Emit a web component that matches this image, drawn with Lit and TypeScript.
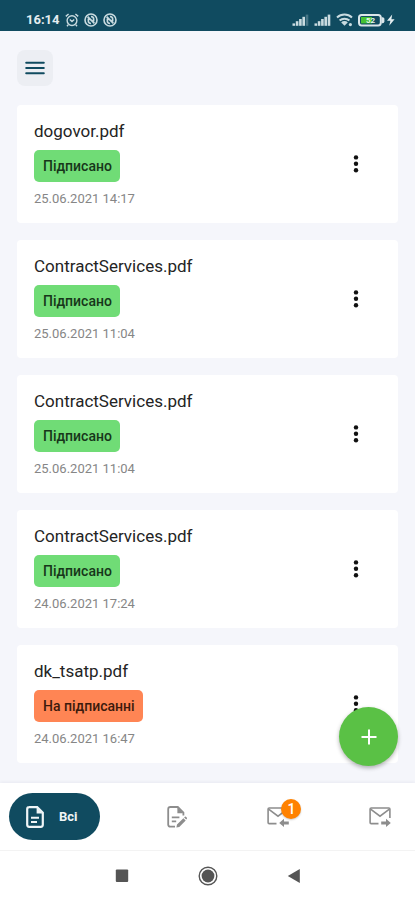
import { LitElement, html, css, svg } from "lit";
import { customElement, property } from "lit/decorators.js";
import { classMap } from "lit/directives/class-map.js";

interface Doc {
  name: string;
  status: string;
  pending?: boolean;
  date: string;
}

const DOCS: Doc[] = [
  { name: "dogovor.pdf", status: "Підписано", date: "25.06.2021 14:17" },
  { name: "ContractServices.pdf", status: "Підписано", date: "25.06.2021 11:04" },
  { name: "ContractServices.pdf", status: "Підписано", date: "25.06.2021 11:04" },
  { name: "ContractServices.pdf", status: "Підписано", date: "24.06.2021 17:24" },
  { name: "dk_tsatp.pdf", status: "На підписанні", pending: true, date: "24.06.2021 16:47" },
];

const buttonReset = css`
  * {
    box-sizing: border-box;
  }
  button {
    display: flex;
    align-items: center;
    justify-content: center;
    margin: 0;
    padding: 0;
    border: 0;
    background: none;
    color: inherit;
    font: inherit;
    cursor: pointer;
  }
  svg {
    display: block;
    flex: none;
  }
`;

@customElement("status-bar")
class StatusBar extends LitElement {
  static styles = css`
    :host {
      display: flex;
      align-items: center;
      justify-content: space-between;
      height: 31px;
      padding: 8px 20px 0 26px;
      box-sizing: border-box;
      background: #104b60;
      color: #e4edf0;
      font-size: 13px;
      font-weight: 700;
      line-height: 16px;
    }
    .group {
      display: flex;
      align-items: center;
      gap: 5px;
    }
    svg {
      display: block;
    }
  `;

  private blocked() {
    return html`<svg width="14" height="14" viewBox="0 0 14 14" fill="none" stroke="#c9dbe0">
      <circle cx="7" cy="7" r="6" stroke-width="1.6" />
      <path d="M3.6 3.6l6.8 6.8M4.4 5.6v2.6a2.2 2.2 0 0 0 2.6 2.2M9.6 8.6V5.8A2.2 2.2 0 0 0 7 3.6" stroke-width="1.7" />
    </svg>`;
  }

  private signal(last: number) {
    return html`<svg width="17" height="12" viewBox="0 0 17 12">
      ${[0, 1, 2, 3, 4].map(
        (i) => svg`<rect x=${0.5 + i * 3.3} y=${9.4 - i * 2.2} width="2.6" height=${2.4 + i * 2.2}
          fill="#c9dbe0" opacity=${i < last ? 1 : 0.3} />`
      )}
    </svg>`;
  }

  render() {
    return html`
      <div class="group">
        <span>16:14</span>
        <svg width="14" height="14" viewBox="0 0 14 14" fill="none" stroke="#c9dbe0" stroke-width="1.4">
          <circle cx="7" cy="7.6" r="4.9" />
          <path d="M.8 3.4 3.6 1M13.2 3.4 10.4 1M4.8 6.6 7 8.6l2.2-2M3.2 11.8 2 13.2M10.8 11.8l1.2 1.4" />
        </svg>
        ${this.blocked()} ${this.blocked()}
      </div>
      <div class="group">
        ${this.signal(4)} ${this.signal(5)}
        <svg width="17" height="14" viewBox="0 0 17 14" fill="none" stroke="#c9dbe0" stroke-width="2">
          <path d="M1 4.4a11 11 0 0 1 15 0M3.6 7.6a7.2 7.2 0 0 1 9.8 0" />
          <path d="M5.2 9.4a4.6 4.6 0 0 1 6.6 0L8.5 12.8z" fill="#c9dbe0" stroke="none" />
          <circle cx="14.4" cy="11.6" r="1.6" fill="#c9dbe0" stroke="none" />
        </svg>
        <svg width="37" height="14" viewBox="0 0 37 14">
          <rect x="1" y="2" width="21.8" height="10.4" rx="2.6" fill="none" stroke="#dbe6ea" stroke-width="2" />
          <rect x="3" y="4" width="11" height="6.4" fill="#45c332" />
          <path d="M23.6 4.2h1q1.8 0 1.8 1.6v2.8q0 1.6-1.8 1.6h-1z" fill="#dbe6ea" />
          <text x="12.5" y="10" text-anchor="middle" font-size="8" font-weight="700" fill="#e8f6e8">52</text>
          <path d="M34.2 1.6 29 7.8h3.4L31.2 12.8l5.4-6.6h-3.2z" fill="#e4edf0" />
        </svg>
      </div>
    `;
  }
}

@customElement("doc-card")
class DocCard extends LitElement {
  @property({ attribute: false }) doc!: Doc;

  static styles = [
    buttonReset,
    css`
      :host {
        display: flex;
        align-items: center;
        justify-content: space-between;
        padding: 15px 18px 15px 17px;
        border-radius: 4px;
        background: #fff;
      }
      .info {
        display: flex;
        flex-direction: column;
        align-items: flex-start;
      }
      h2 {
        margin: 0;
        color: #242424;
        font-size: 17px;
        font-weight: 400;
        line-height: 22px;
      }
      .badge {
        margin: 8px 0;
        padding: 0 8px 0 9px;
        border-radius: 5px;
        background: #70dc76;
        color: #17361a;
        font-size: 14px;
        font-weight: 500;
        line-height: 32px;
      }
      .pending {
        background: #ff8554;
        color: #3c1a0c;
      }
      time {
        color: #868686;
        font-size: 13px;
        line-height: 18px;
      }
      .more {
        width: 48px;
        height: 48px;
      }
    `,
  ];

  render() {
    const { name, status, pending, date } = this.doc;
    return html`
      <div class="info">
        <h2>${name}</h2>
        <span class=${classMap({ badge: true, pending: !!pending })}>${status}</span>
        <time>${date}</time>
      </div>
      <button class="more" aria-label="Дії">
        <svg width="6" height="18" viewBox="0 0 6 18" fill="#111">
          <circle cx="3" cy="2.4" r="2.2" />
          <circle cx="3" cy="8.8" r="2.2" />
          <circle cx="3" cy="15.2" r="2.2" />
        </svg>
      </button>
    `;
  }
}

@customElement("app-root")
class AppRoot extends LitElement {
  static styles = [
    buttonReset,
    css`
      :host {
        display: flex;
        flex-direction: column;
        height: 100vh;
        background: #f5f6fb;
        font-family: Roboto, "Noto Sans", sans-serif;
      }
      header {
        padding: 19px 17px;
      }
      .menu {
        width: 36px;
        height: 36px;
        border-radius: 8px;
        background: #eceef3;
      }
      .content {
        position: relative;
        display: flex;
        flex: 1;
        flex-direction: column;
        min-height: 0;
      }
      main {
        display: flex;
        flex: 1;
        flex-direction: column;
        gap: 17px;
        min-height: 0;
        padding: 0 17px;
        overflow: auto;
        scrollbar-width: none;
      }
      doc-card {
        flex: none;
      }
      .add {
        position: absolute;
        right: 17px;
        bottom: 17px;
        width: 59px;
        height: 59px;
        border-radius: 50%;
        background: #5ac145;
        box-shadow: 0 2px 4px rgba(0, 0, 0, 0.3);
      }
      .tabs {
        display: flex;
        align-items: center;
        justify-content: space-between;
        height: 68px;
        padding: 0 11px 0 9px;
        border-bottom: 1px solid #f3f3f3;
        background: #fff;
        box-shadow: 0 -1px 3px rgba(40, 40, 80, 0.06);
        color: #8d8d8d;
      }
      .tab {
        width: 48px;
        height: 48px;
      }
      .icon {
        position: relative;
      }
      .current {
        gap: 15px;
        padding: 0 22px 0 17px;
        height: 47px;
        border-radius: 24px;
        background: #104b60;
        color: #f0f5f7;
        font-size: 13px;
        font-weight: 700;
      }
      .count {
        position: absolute;
        top: -8px;
        right: -12px;
        width: 20px;
        height: 20px;
        border-radius: 50%;
        background: #ff8200;
        box-shadow: 0 1px 2px rgba(0, 0, 0, 0.2);
        color: #fff;
        font-size: 14px;
        font-weight: 500;
        line-height: 20px;
        text-align: center;
      }
      .system {
        display: flex;
        align-items: center;
        justify-content: center;
        gap: 38px;
        height: 49px;
        background: #fff;
        color: #555;
      }
      .system button {
        width: 48px;
        height: 48px;
      }
    `,
  ];

  private envelope(arrow: string) {
    return html`<svg width="22" height="20" viewBox="0 0 22 20" fill="none" stroke="currentColor" stroke-width="1.6">
      <path d="M9.5 16.6H2.2q-1.1 0-1.1-1.1V2.1q0-1.1 1.1-1.1h17.6q1.1 0 1.1 1.1V11" />
      <path d="M1.6 2.2 11 9.2l9.4-7" />
      <path d=${arrow} fill="currentColor" stroke="none" />
    </svg>`;
  }

  render() {
    return html`
      <status-bar></status-bar>
      <header>
        <button class="menu" aria-label="Меню">
          <svg width="20" height="16" viewBox="0 0 20 16" stroke="#104b60" stroke-width="2" stroke-linecap="round">
            <path d="M1.2 2.7h17.6M1.2 8h17.6M1.2 13.3h17.6" />
          </svg>
        </button>
      </header>
      <div class="content">
        <main>${DOCS.map((d) => html`<doc-card .doc=${d}></doc-card>`)}</main>
        <button class="add" aria-label="Додати">
          <svg width="16" height="16" viewBox="0 0 16 16" stroke="#fff" stroke-width="2">
            <path d="M8 .5v15M.5 8h15" />
          </svg>
        </button>
      </div>
      <nav class="tabs">
        <button class="current" aria-current="page">
          <svg width="18" height="22" viewBox="0 0 18 22" fill="none" stroke="currentColor" stroke-width="2.2">
            <path d="M3 1.2h8.2l5.6 5.6v12q0 2-2 2H3.2q-2 0-2-2V3.2q0-2 2-2z" />
            <path d="M10.6 1.4v6h6z" fill="currentColor" stroke="none" />
            <path d="M5 11.8h8M5 16h6" stroke-width="2" />
          </svg>
          <span>Всі</span>
        </button>
        <button class="tab" aria-label="Чернетки">
          <svg width="20" height="22" viewBox="0 0 20 22" fill="none" stroke="currentColor" stroke-width="1.8">
            <path d="M8 20.6H3.4q-2.2 0-2.2-2.2V3.2Q1.2 1 3.4 1h7.4l5.6 5.6v3" />
            <path d="M10.4 1.2v6h6z" fill="currentColor" stroke="none" />
            <path d="M4.8 11.4h7.6M4.8 15.4h4.4" />
            <path d="M9.4 21.6l.6-3 6.4-6.4 2.3 2.3-6.4 6.4zM17.1 11.5l.8-.8q.5-.4 1 0l1 1q.4.5 0 1l-.7.8z" fill="currentColor" stroke="none" />
          </svg>
        </button>
        <button class="tab" aria-label="Вхідні">
          <span class="icon">
            ${this.envelope("M17 11.8v2.6h4.8v3H17v2.6l-4.8-4.1z")}
            <span class="count">1</span>
          </span>
        </button>
        <button class="tab" aria-label="Вихідні">
          ${this.envelope("M17 11.8v2.6h-4.8v3H17v2.6l4.8-4.1z")}
        </button>
      </nav>
      <nav class="system">
        <button aria-label="Останні">
          <svg width="14" height="14" viewBox="0 0 14 14" fill="currentColor">
            <rect x=".8" y=".5" width="12.4" height="12.4" rx="1" />
          </svg>
        </button>
        <button aria-label="Додому">
          <svg width="20" height="20" viewBox="0 0 20 20">
            <circle cx="10" cy="10" r="8.8" fill="none" stroke="currentColor" stroke-width="1.4" />
            <circle cx="10" cy="10" r="6.4" fill="currentColor" />
          </svg>
        </button>
        <button aria-label="Назад">
          <svg width="14" height="14" viewBox="0 0 14 14" fill="currentColor">
            <path d="M12.8 0v14L.8 7z" />
          </svg>
        </button>
      </nav>
    `;
  }
}
